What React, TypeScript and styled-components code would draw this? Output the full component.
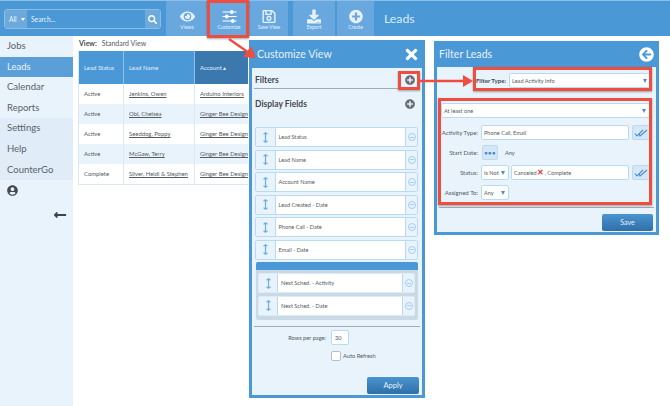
import React from "react";
import styled, { createGlobalStyle } from "styled-components";
import {
  FaArrowCircleLeft,
  FaDownload,
  FaEye,
  FaLongArrowAltLeft,
  FaPlusCircle,
  FaRegSave,
  FaSearch,
  FaTimes,
  FaUserCircle,
} from "react-icons/fa";

const BLUE = "#4b98d6";
const PALE = "#e8f3fc";
const EDGE = "#b9daf5";
const RED = "#ee4e40";
const TEXT = "#555b60";

const Global = createGlobalStyle`
  html, body { margin: 0; padding: 0; background: #fff; }
  * { box-sizing: border-box; }
  #root { width: 670px; height: 406px; overflow: hidden; }
`;

const Page = styled.div`
  position: relative;
  width: 670px;
  height: 406px;
  overflow: hidden;
  font-family: Lato, "Liberation Sans", sans-serif;
  color: ${TEXT};
`;

const TopBar = styled.header`
  display: flex;
  height: 36px;
  background: ${BLUE};
  border-top: 1px solid #8fbfe6;
`;

const SearchGroup = styled.div`
  display: flex;
  align-items: stretch;
  width: 157px;
  height: 20px;
  margin: 8px 5px 0 4px;
  border: 1px solid #8dbde6;
  border-radius: 3px;
  color: #e8f3fc;
  font-size: 6.7px;
`;

const ScopeSelect = styled.div`
  display: flex;
  align-items: center;
  gap: 4px;
  width: 22px;
  padding-left: 4px;
  background: #6ea9dc;

  &::after {
    content: "";
    border: 2px solid transparent;
    border-top: 3px solid #fff;
    margin-top: 3px;
  }
`;

const SearchInput = styled.div`
  flex: 1;
  display: flex;
  align-items: center;
  padding-left: 4px;
`;

const SearchButton = styled.div`
  width: 15px;
  display: flex;
  align-items: center;
  justify-content: center;
  background: #6ea9dc;
  font-size: 9px;
  color: #fff;
`;

const ToolButton = styled.div<{ $w: number; $mr?: number }>`
  width: ${(p) => p.$w}px;
  margin-right: ${(p) => p.$mr ?? 0}px;
  display: flex;
  flex-direction: column;
  align-items: center;
  padding-top: 8px;
  background: #69a8de;
  color: #e6f1fb;
  font-size: 5px;
  line-height: 7px;

  svg {
    display: block;
    height: 15px;
  }
`;

const PageTitle = styled.div`
  margin-left: 10px;
  color: #dcebf8;
  font-size: 12.3px;
  line-height: 36px;
`;

const Content = styled.div`
  display: flex;
  height: 370px;
`;

const SideNav = styled.nav`
  width: 73px;
  background: ${PALE};
`;

const NavItem = styled.div<{ $active?: boolean; $shade?: boolean }>`
  height: 20.6px;
  padding-left: 7px;
  font-size: 9.5px;
  line-height: 20.6px;
  background: ${(p) => (p.$active ? "#5b9fd9" : p.$shade ? "#e0edf8" : "transparent")};
  color: ${(p) => (p.$active ? "#eaf4fc" : "#5c6266")};
`;

const Avatar = styled.div`
  padding: 5px 0 0 7px;
  font-size: 11px;
  line-height: 11px;
  color: #444a4e;
`;

const Collapse = styled.div`
  padding: 11px 0 0 53px;
  font-size: 14px;
  line-height: 14px;
  color: #3f4448;
`;

const Main = styled.main`
  width: 172px;
  margin-left: 5px;
`;

const ViewLine = styled.div`
  display: flex;
  gap: 5px;
  height: 15px;
  padding-left: 1px;
  font-size: 7px;
  line-height: 14px;

  b {
    color: #44494d;
  }
`;

const LeadsTable = styled.div`
  display: grid;
  grid-template-columns: 45px 71px 56px;
  border-left: 1px solid #dbe9f5;
  border-bottom: 1px solid #dbe9f5;
`;

const HeadCell = styled.div<{ $sorted?: boolean }>`
  height: 33px;
  display: flex;
  align-items: center;
  padding-left: 5px;
  background: ${(p) => (p.$sorted ? "#3a78ae" : BLUE)};
  border-right: 1px solid #8fc0e8;
  color: #e4f0fa;
  font-size: 6px;
  white-space: nowrap;
`;

const Cell = styled.div<{ $alt: boolean; $link?: boolean }>`
  height: 20px;
  padding-left: 5px;
  white-space: nowrap;
  background: ${(p) => (p.$alt ? PALE : "#fff")};
  border-right: 1px solid #dbe9f5;
  font-size: 5.9px;
  line-height: 20px;
  text-decoration: ${(p) => (p.$link ? "underline" : "none")};
`;

const Dialog = styled.section<{ $x: number; $y: number; $w: number; $h: number }>`
  position: absolute;
  left: ${(p) => p.$x}px;
  top: ${(p) => p.$y}px;
  width: ${(p) => p.$w}px;
  height: ${(p) => p.$h}px;
  display: flex;
  flex-direction: column;
  background: ${BLUE};
  padding: 0 3px 3px;
  box-shadow: 0 0 0 1px #fff;
`;

const DialogHead = styled.div<{ $h: number; $pl: number; $icon: number }>`
  display: flex;
  align-items: center;
  justify-content: space-between;
  height: ${(p) => p.$h}px;
  flex: none;
  padding: 0 2px 0 ${(p) => p.$pl}px;
  color: #e6f1fb;
  font-size: 10.6px;

  svg {
    color: #fff;
    font-size: ${(p) => p.$icon}px;
  }
`;

const DialogBody = styled.div`
  flex: 1;
  background: ${PALE};
  display: flex;
  flex-direction: column;
`;

const SectionHead = styled.div<{ $rule?: boolean; $mt: number }>`
  display: flex;
  align-items: center;
  justify-content: space-between;
  height: 18px;
  margin: ${(p) => p.$mt}px 2px 0;
  padding: 0 5px 0 1px;
  border-bottom: ${(p) => (p.$rule ? "1px solid #a3abb2" : "1px solid transparent")};
  color: #44494d;
  font-size: 8.5px;
  font-weight: 700;

  svg {
    color: #686e73;
    font-size: 10px;
  }
`;

const FieldList = styled.div`
  display: flex;
  flex-direction: column;
  gap: 2.5px;
  margin: 14px 4px 0 3px;
`;

const FieldRow = styled.div<{ $inner?: boolean }>`
  display: grid;
  grid-template-columns: ${(p) => (p.$inner ? "19px 1fr 12px" : "19.5px 1fr 12px")};
  height: 20px;
  border: 1.5px solid ${(p) => (p.$inner ? "#dcebf7" : EDGE)};
  border-radius: 2px;
  background: #fff;
  font-size: 5.6px;
`;

const Grip = styled.div`
  background: ${PALE};
  border-right: 1px solid ${EDGE};
  display: flex;
  align-items: center;
  justify-content: center;
`;

const FieldName = styled.div`
  padding-left: 3px;
  line-height: 17px;
  white-space: nowrap;
  overflow: hidden;
`;

const RemoveCell = styled.div`
  border-left: 1px solid ${EDGE};
  background: ${PALE};
  display: flex;
  align-items: center;
  justify-content: center;
`;

const RemoveIcon = styled.span`
  width: 8px;
  height: 8px;
  border: 1px solid #a6cdee;
  border-radius: 50%;
  display: flex;
  align-items: center;
  justify-content: center;

  &::after {
    content: "";
    width: 4px;
    height: 1px;
    background: #a6cdee;
  }
`;

const Group = styled.div`
  margin: 2.5px 4px 0 3.5px;
  height: 58px;
  flex: none;
  background: #c9d9e6;
  border-radius: 2px;
  overflow: hidden;
`;

const GroupBar = styled.div`
  height: 8px;
  background: ${BLUE};
`;

const GroupRows = styled.div`
  display: flex;
  flex-direction: column;
  gap: 2.5px;
  padding: 3px 3px 0 2.5px;
`;

const Rule = styled.div<{ $mt: number }>`
  height: 1px;
  margin: ${(p) => p.$mt}px 2px 0;
  background: #a3abb2;
  flex: none;
`;

const OptionRow = styled.div<{ $mt: number }>`
  display: grid;
  grid-template-columns: 74px auto;
  justify-content: start;
  align-items: center;
  column-gap: 5px;
  margin-top: ${(p) => p.$mt}px;
  font-size: 5.7px;
`;

const OptionLabel = styled.div`
  text-align: right;
`;

const NumberBox = styled.div`
  width: 18px;
  height: 15px;
  border: 1px solid ${EDGE};
  border-radius: 2px;
  background: #fff;
  padding-left: 3px;
  line-height: 13px;
`;

const CheckLine = styled.div`
  display: flex;
  align-items: center;
  gap: 2px;
`;

const CheckBox = styled.div`
  width: 10px;
  height: 10px;
  border: 1px solid #b8bec3;
  border-radius: 2px;
  background: #fff;
`;

const Footer = styled.div<{ $mt: number }>`
  display: flex;
  justify-content: flex-end;
  margin-top: ${(p) => p.$mt}px;
  padding-right: 3px;
`;

const ActionButton = styled.div<{ $w: number; $size: number }>`
  width: ${(p) => p.$w}px;
  height: 17px;
  border-radius: 2px;
  background: linear-gradient(#4a94d0, #2f6fa8);
  color: #e6f1fb;
  font-size: ${(p) => p.$size}px;
  line-height: 17px;
  text-align: center;
`;

const FilterTypeRow = styled.div`
  display: flex;
  align-items: center;
  justify-content: flex-end;
  gap: 3px;
  padding: 5px 5px 0 0;
  height: 21px;
  flex: none;
  font-size: 6.1px;
  font-weight: 700;
  color: #44494d;
`;

const Select = styled.div<{ $w?: number; $fill?: boolean }>`
  position: relative;
  ${(p) => (p.$w ? `width: ${p.$w}px;` : "")}
  ${(p) => (p.$fill ? "flex: 1;" : "")}
  height: 15px;
  border: 1px solid ${EDGE};
  border-radius: 2px;
  background: #fff;
  padding-left: 2px;
  color: ${TEXT};
  font-size: 5.6px;
  font-weight: 400;
  line-height: 13px;
  white-space: nowrap;

  &::after {
    content: "";
    position: absolute;
    right: 3px;
    top: 5px;
    border: 2.5px solid transparent;
    border-top: 4px solid #4a8fd0;
  }
`;

const CriteriaPanel = styled.div`
  display: flex;
  flex-direction: column;
  gap: 5px;
  padding: 15px 6px 0 4px;
  height: 119px;
  flex: none;
`;

const CriteriaRow = styled.div<{ $lead?: boolean }>`
  display: flex;
  align-items: center;
  gap: 2px;
  height: 15px;
  margin-bottom: ${(p) => (p.$lead ? 2 : 0)}px;
  font-size: 5.6px;
`;

const CriteriaLabel = styled.div`
  width: 37px;
  margin-right: 1px;
  text-align: right;
  white-space: nowrap;
  font-size: 6.1px;
`;

const TextBox = styled.div`
  flex: 1;
  height: 15px;
  border: 1px solid ${EDGE};
  border-radius: 2px;
  background: #fff;
  padding-left: 2px;
  line-height: 13px;
  white-space: nowrap;
`;

const PickButton = styled.div`
  width: 18px;
  height: 15px;
  border: 1px solid ${EDGE};
  border-radius: 2px;
  background: #d5e6f5;
  display: flex;
  align-items: center;
  justify-content: center;
  margin-left: 1px;
`;

const DotsButton = styled(PickButton)`
  width: 16px;
  margin: 0 5px 0 1px;
  color: #3f8bd0;
  font-size: 6px;
  font-weight: 700;
  letter-spacing: 0.3px;
  line-height: 13px;
`;

const CrossMark = styled.span`
  color: #e03c30;
  font-weight: 700;
  font-size: 8px;
  line-height: 6px;
  margin: 0 0.5px;
`;

const Outline = styled.div<{ $x: number; $y: number; $w: number; $h: number }>`
  position: absolute;
  left: ${(p) => p.$x}px;
  top: ${(p) => p.$y}px;
  width: ${(p) => p.$w}px;
  height: ${(p) => p.$h}px;
  border: 3px solid ${RED};
  box-shadow: 0 1px 2px rgba(0, 0, 0, 0.35);
  pointer-events: none;
`;

const ArrowLayer = styled.svg`
  position: absolute;
  left: 0;
  top: 0;
  pointer-events: none;
`;

function SlidersIcon() {
  return (
    <svg width="15" height="15" viewBox="0 0 15 15" fill="none" stroke="#fff" strokeWidth="1">
      <path d="M0.5 3h14M0.5 7.5h14M0.5 12h14" />
      <rect x="8.5" y="1.5" width="2.5" height="3" rx="1" fill="#fff" />
      <rect x="3.5" y="6" width="2.5" height="3" rx="1" fill="#fff" />
      <rect x="9.5" y="10.5" width="2.5" height="3" rx="1" fill="#fff" />
    </svg>
  );
}

function ChecksIcon() {
  return (
    <svg width="14" height="8" viewBox="0 0 14 8" fill="none" stroke="#4a8fd0" strokeWidth="1.1">
      <path d="M1 4.5 3 7 9 1M5 4.5 6 7 13 1" />
    </svg>
  );
}

function GripIcon() {
  return (
    <svg width="5" height="11" viewBox="0 0 5 11" fill="none" stroke="#6daee3" strokeWidth="1.2">
      <path d="M0.5 2.2 2.5 0.8 4.5 2.2M0.5 8.8 2.5 10.2 4.5 8.8M2.5 1v9" />
    </svg>
  );
}

function Field({ name, inner }: { name: string; inner?: boolean }) {
  return (
    <FieldRow $inner={inner}>
      <Grip>
        <GripIcon />
      </Grip>
      <FieldName>{name}</FieldName>
      <RemoveCell>
        <RemoveIcon />
      </RemoveCell>
    </FieldRow>
  );
}

const rows = [
  ["Active", "Jenkins, Owen", "Arduino Interiors"],
  ["Active", "Obi, Chelsea", "Ginger Bee Design"],
  ["Active", "Seeddog, Poppy", "Ginger Bee Design"],
  ["Active", "McGaw, Terry", "Ginger Bee Design"],
  ["Complete", "Silver, Heidi & Stephen", "Ginger Bee Design"],
];

const fields = [
  "Lead Status",
  "Lead Name",
  "Account Name",
  "Lead Created - Date",
  "Phone Call - Date",
  "Email - Date",
];

export default function App() {
  return (
    <Page>
      <Global />
      <TopBar>
        <SearchGroup>
          <ScopeSelect>All</ScopeSelect>
          <SearchInput>Search...</SearchInput>
          <SearchButton>
            <FaSearch />
          </SearchButton>
        </SearchGroup>
        <ToolButton $w={42}>
          <FaEye size={15} />
          Views
        </ToolButton>
        <ToolButton $w={42}>
          <SlidersIcon />
          Customize
        </ToolButton>
        <ToolButton $w={38} $mr={5}>
          <FaRegSave size={14} />
          Save View
        </ToolButton>
        <ToolButton $w={42} $mr={2}>
          <FaDownload size={14} />
          Export
        </ToolButton>
        <ToolButton $w={37}>
          <FaPlusCircle size={14} />
          Create
        </ToolButton>
        <PageTitle>Leads</PageTitle>
      </TopBar>
      <Content>
        <SideNav>
          <NavItem>Jobs</NavItem>
          <NavItem $active>Leads</NavItem>
          <NavItem>Calendar</NavItem>
          <NavItem>Reports</NavItem>
          <NavItem $shade>Settings</NavItem>
          <NavItem $shade>Help</NavItem>
          <NavItem $shade>CounterGo</NavItem>
          <Avatar>
            <FaUserCircle />
          </Avatar>
          <Collapse>
            <FaLongArrowAltLeft />
          </Collapse>
        </SideNav>
        <Main>
          <ViewLine>
            <b>View:</b> Standard View
          </ViewLine>
          <LeadsTable>
            <HeadCell>Lead Status</HeadCell>
            <HeadCell>Lead Name</HeadCell>
            <HeadCell $sorted>Account ▴</HeadCell>
            {rows.map((row, i) => (
              <React.Fragment key={row[1]}>
                <Cell $alt={i % 2 === 1}>{row[0]}</Cell>
                <Cell $alt={i % 2 === 1} $link>
                  {row[1]}
                </Cell>
                <Cell $alt={i % 2 === 1} $link>
                  {row[2]}
                </Cell>
              </React.Fragment>
            ))}
          </LeadsTable>
        </Main>
      </Content>

      <Dialog $x={249} $y={40} $w={176} $h={358}>
        <DialogHead $h={28} $pl={5} $icon={17}>
          Customize View
          <FaTimes />
        </DialogHead>
        <DialogBody>
          <SectionHead $rule $mt={3}>
            Filters
            <FaPlusCircle />
          </SectionHead>
          <SectionHead $mt={6}>
            Display Fields
            <FaPlusCircle />
          </SectionHead>
          <FieldList>
            {fields.map((f) => (
              <Field key={f} name={f} />
            ))}
          </FieldList>
          <Group>
            <GroupBar />
            <GroupRows>
              <Field inner name="Next Sched. - Activity" />
              <Field inner name="Next Sched. - Date" />
            </GroupRows>
          </Group>
          <Rule $mt={5.5} />
          <OptionRow $mt={3}>
            <OptionLabel>Rows per page:</OptionLabel>
            <NumberBox>30</NumberBox>
          </OptionRow>
          <OptionRow $mt={6}>
            <span />
            <CheckLine>
              <CheckBox />
              Auto Refresh
            </CheckLine>
          </OptionRow>
          <Footer $mt={16}>
            <ActionButton $w={52} $size={7.5}>
              Apply
            </ActionButton>
          </Footer>
        </DialogBody>
      </Dialog>

      <Dialog $x={434} $y={41} $w={225} $h={194}>
        <DialogHead $h={26} $pl={2} $icon={15}>
          Filter Leads
          <FaArrowCircleLeft />
        </DialogHead>
        <DialogBody>
          <FilterTypeRow>
            Filter Type:
            <Select $w={142}>Lead Activity Info</Select>
          </FilterTypeRow>
          <CriteriaPanel>
            <CriteriaRow $lead>
              <Select $fill>At least one</Select>
            </CriteriaRow>
            <CriteriaRow>
              <CriteriaLabel>Activity Type:</CriteriaLabel>
              <TextBox>Phone Call, Email</TextBox>
              <PickButton>
                <ChecksIcon />
              </PickButton>
            </CriteriaRow>
            <CriteriaRow>
              <CriteriaLabel>Start Date:</CriteriaLabel>
              <DotsButton>•••</DotsButton>
              Any
            </CriteriaRow>
            <CriteriaRow>
              <CriteriaLabel>Status:</CriteriaLabel>
              <Select $w={28}>Is Not</Select>
              <TextBox>
                Canceled<CrossMark>✕</CrossMark>, Complete
              </TextBox>
              <PickButton>
                <ChecksIcon />
              </PickButton>
            </CriteriaRow>
            <CriteriaRow>
              <CriteriaLabel>Assigned To:</CriteriaLabel>
              <Select $w={28}>Any</Select>
            </CriteriaRow>
          </CriteriaPanel>
          <Rule $mt={0} />
          <Footer $mt={6}>
            <ActionButton $w={51} $size={7}>
              Save
            </ActionButton>
          </Footer>
        </DialogBody>
      </Dialog>

      <Outline $x={207} $y={0} $w={42} $h={38} />
      <Outline $x={398} $y={71} $w={22} $h={19} />
      <Outline $x={473} $y={67} $w={179} $h={24} />
      <Outline $x={438} $y={98} $w={214} $h={107} />
      <ArrowLayer width="670" height="406" viewBox="0 0 670 406">
        <g fill="none" stroke={RED} strokeWidth="2.5">
          <path d="M229 39 252 55" />
          <path d="M420 81H468" />
        </g>
        <path d="M256 58 243 57 251 46Z" fill={RED} />
        <path d="M473 81 463 75V87Z" fill={RED} />
      </ArrowLayer>
    </Page>
  );
}
